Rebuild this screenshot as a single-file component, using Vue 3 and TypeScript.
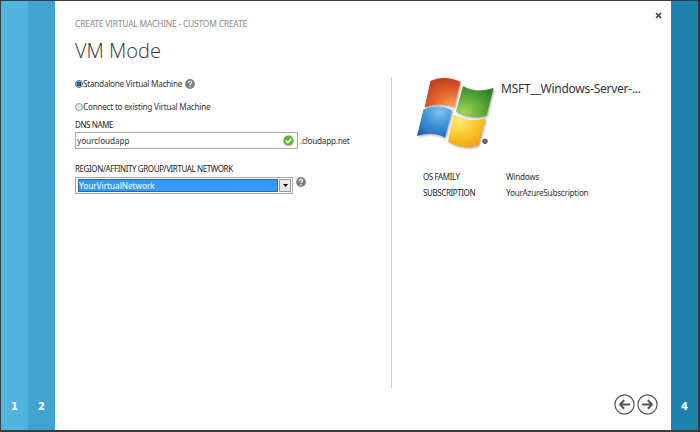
<script setup lang="ts">
import { ref } from 'vue'

const mode = ref<'standalone' | 'connect'>('standalone')
const dnsName = ref('yourcloudapp')
const network = ref('YourVirtualNetwork')
const details: { label: string; value: string }[] = [
  { label: 'OS FAMILY', value: 'Windows' },
  { label: 'SUBSCRIPTION', value: 'YourAzureSubscription' },
]
</script>

<template>
  <div class="window">
    <aside class="step step-one"><span>1</span></aside>
    <aside class="step step-two"><span>2</span></aside>
    <main class="dialog">
      <button class="close" aria-label="Close">
        <svg width="7" height="7" viewBox="0 0 7 7"><path d="M1 1L6 6M6 1L1 6" stroke="#444" stroke-width="1.7" /></svg>
      </button>
      <section class="form">
        <div class="crumb">CREATE VIRTUAL MACHINE - CUSTOM CREATE</div>
        <h1>VM Mode</h1>
        <div class="option first" @click="mode = 'standalone'">
          <i class="radio" :class="{ on: mode === 'standalone' }"></i>
          <span>Standalone Virtual Machine</span>
          <svg class="help" width="10" height="10" viewBox="0 0 10 10"><circle cx="5" cy="5" r="4.9" fill="#808080" /><path d="M3.4 4C3.4 1.7 6.7 1.8 6.6 3.8C6.5 4.8 5 4.8 5 6M5 7.1V8.2" fill="none" stroke="#fff" stroke-width="1.2" /></svg>
        </div>
        <div class="option second" @click="mode = 'connect'">
          <i class="radio" :class="{ on: mode === 'connect' }"></i>
          <span>Connect to existing Virtual Machine</span>
        </div>
        <div class="label dns">DNS NAME</div>
        <div class="row">
          <div class="input">
            <span>{{ dnsName }}</span>
            <svg width="11" height="11" viewBox="0 0 11 11"><circle cx="5.5" cy="5.5" r="5.2" fill="#62b233" /><path d="M2.7 5.5L4.8 7.6L8.4 3.6" fill="none" stroke="#fff" stroke-width="1.6" /></svg>
          </div>
          <span class="suffix">.cloudapp.net</span>
        </div>
        <div class="label region">REGION/AFFINITY GROUP/VIRTUAL NETWORK</div>
        <div class="row select-row">
          <div class="select">
            <div class="chosen"><span>{{ network }}</span></div>
            <div class="drop"><svg width="5" height="3" viewBox="0 0 5 3"><path d="M0 0H5L2.5 3Z" fill="#000" /></svg></div>
          </div>
          <svg class="help" width="10" height="10" viewBox="0 0 10 10"><circle cx="5" cy="5" r="4.9" fill="#808080" /><path d="M3.4 4C3.4 1.7 6.7 1.8 6.6 3.8C6.5 4.8 5 4.8 5 6M5 7.1V8.2" fill="none" stroke="#fff" stroke-width="1.2" /></svg>
        </div>
      </section>
      <section class="summary">
        <div class="image-row">
          <svg class="logo" width="84" height="78" viewBox="0 0 84 78">
            <defs>
              <radialGradient id="red" cx="0.75" cy="0.95" r="1"><stop offset="0" stop-color="#f5a04c" /><stop offset="0.5" stop-color="#e2642b" /><stop offset="1" stop-color="#bd3b1c" /></radialGradient>
              <radialGradient id="green" cx="0.2" cy="0.85" r="0.95"><stop offset="0" stop-color="#a5d25c" /><stop offset="0.5" stop-color="#62ae38" /><stop offset="1" stop-color="#2f8129" /></radialGradient>
              <radialGradient id="blue" cx="0.65" cy="0.15" r="1"><stop offset="0" stop-color="#7dc3ee" /><stop offset="0.5" stop-color="#3a8fd5" /><stop offset="1" stop-color="#1a5cac" /></radialGradient>
              <radialGradient id="yellow" cx="0.3" cy="0.2" r="1"><stop offset="0" stop-color="#ffea70" /><stop offset="0.5" stop-color="#fcc326" /><stop offset="1" stop-color="#e79612" /></radialGradient>
              <filter id="shade" x="-10%" y="-10%" width="125%" height="125%"><feDropShadow dx="1" dy="1.2" stdDeviation="0.9" flood-color="#444" flood-opacity="0.5" /></filter>
            </defs>
            <g filter="url(#shade)">
              <path d="M16.5 4C25 -0.3 37 0 46.5 5L40 30.5C32 26.5 21 26.5 10.5 30.5Z" fill="url(#red)" />
              <path d="M49 9C58 14.5 68 14.5 79.5 11L72.5 38.5C63 42 51 40 42 34.5Z" fill="url(#green)" />
              <path d="M9.5 32.5C19 28.5 29 28.5 38 33.5L31 60.5C23 56 13 55.5 3 59Z" fill="url(#blue)" />
              <path d="M39.5 37.5C49 43 60 44.5 71.5 41.5L64.5 68C55 72 43 70 34 64.5Z" fill="url(#yellow)" />
            </g>
            <circle cx="71" cy="64.3" r="2.3" fill="#777" stroke="#333" stroke-width="0.8" />
          </svg>
          <span class="image-name">MSFT__Windows-Server-...</span>
        </div>
        <dl>
          <div v-for="d in details" :key="d.label">
            <dt>{{ d.label }}</dt><dd>{{ d.value }}</dd>
          </div>
        </dl>
        <nav>
          <svg width="21" height="21" viewBox="0 0 21 21"><circle cx="10.5" cy="10.5" r="9.6" /><path class="arrow" d="M16 10.5H6.2M10.2 6.3L6 10.5L10.2 14.7" /></svg>
          <svg width="21" height="21" viewBox="0 0 21 21"><circle cx="10.5" cy="10.5" r="9.6" /><path class="arrow" d="M5 10.5H14.8M10.8 6.3L15 10.5L10.8 14.7" /></svg>
        </nav>
      </section>
    </main>
    <aside class="step step-four"><span>4</span></aside>
  </div>
</template>

<style>
body { margin: 0; }
</style>

<style scoped>
* { box-sizing: border-box; }
.window { width: 700px; height: 432px; display: flex; border: solid #3c3c3e; border-width: 1px 2px 2px 1px; background: #fff; font: 8.2px/12px "Noto Sans", "Open Sans", sans-serif; letter-spacing: -0.25px; color: #333; white-space: nowrap; }
.step { width: 27px; display: flex; align-items: flex-end; justify-content: center; padding-bottom: 17px; color: #fff; font: 700 10px/13px "DejaVu Sans", sans-serif; letter-spacing: 0; }
.step-one { background: #51b4e0; }
.step-two { background: #41a4d0; }
.step-four { background: #1f83b0; }
.dialog { flex: 1; display: flex; position: relative; }
.close { position: absolute; right: 9px; top: 11px; width: 7px; height: 7px; padding: 0; border: 0; background: none; }
svg { display: block; flex: none; }
.form { width: 336px; padding: 17px 0 0 20px; }
.crumb { font-size: 8.5px; color: #888; letter-spacing: -0.24px; }
h1 { margin: 7px 0 0; font: 300 20px/28px "Open Sans", sans-serif; letter-spacing: 0; color: #333; }
.option { display: flex; align-items: center; height: 12px; }
.first { margin-top: 13px; }
.second { margin-top: 11px; }
.radio { width: 8px; height: 8px; border: 1px solid #999; border-radius: 50%; background: #e8e8e8; }
.radio.on { border-color: #567; background: radial-gradient(circle, #2478a4 0 1.2px, #123c5c 2.1px, #e4ecf0 2.8px); }
.help { margin-left: 3px; }
.label, dt { color: #222; font-size: 8px; font-weight: 400; letter-spacing: -0.4px; }
.dns { margin-top: 6px; }
.row { display: flex; }
.input { width: 223px; height: 17px; margin-top: 1px; border: 1px solid #aaa; display: flex; align-items: center; justify-content: space-between; padding: 0 3px 0 1px; letter-spacing: -0.05px; }
.suffix { margin: 4px 0 0 2px; }
.region { margin-top: 14px; }
.select { width: 218px; height: 17px; border: 1px solid #aaa; display: flex; padding: 1px 1px 1px 2px; }
.select-row { margin-top: 2px; }
.chosen { flex: 1; background: #3399ff; border: 1px solid #35679b; color: #fff; line-height: 12px; letter-spacing: 0; }
.drop { width: 12px; margin-left: 1px; border: 1px solid #999; background: #e8e8e8; display: flex; align-items: center; justify-content: center; }
.summary { flex: 1; margin: 76px 0 42px; border-left: 1px solid #ccc; position: relative; }
.image-row { display: flex; margin-left: 22px; }
.image-name { font-size: 12px; line-height: 18px; margin: 3px 0 0 3px; }
dl { margin: 16px 0 0 31px; }
dl div { display: flex; height: 16px; }
dt { width: 83px; }
dd { margin: 0; }
nav { position: absolute; right: 13px; bottom: -27px; display: flex; gap: 2px; }
nav circle { fill: none; stroke: #555; stroke-width: 1.2; }
.arrow { fill: none; stroke: #555; stroke-width: 2; }
</style>
